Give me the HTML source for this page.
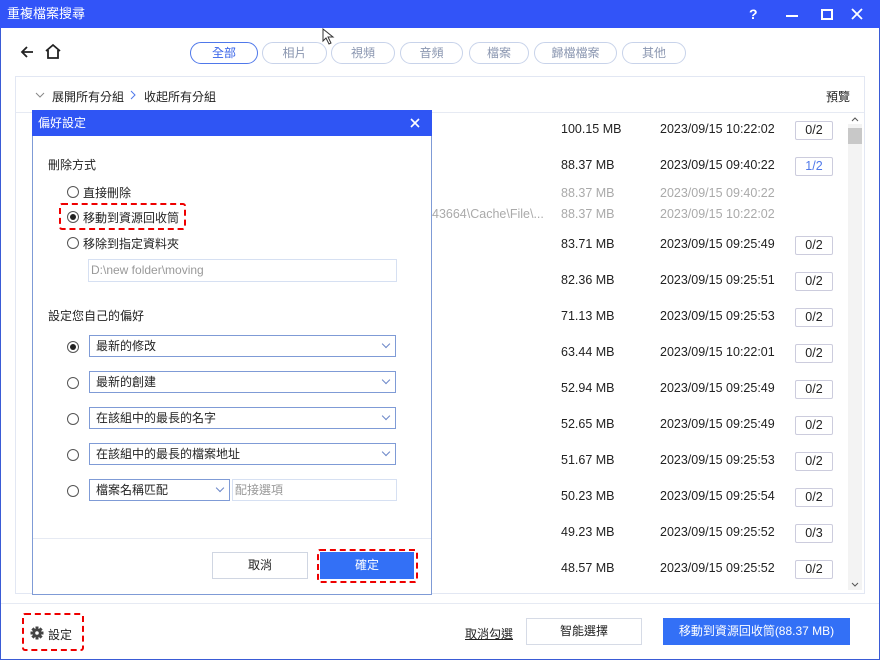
<!DOCTYPE html>
<html><head><meta charset="utf-8"><style>
*{box-sizing:border-box;margin:0;padding:0}
body{width:880px;height:660px;overflow:hidden;background:#fff;font-family:"Liberation Sans","Noto Sans CJK TC",sans-serif;font-size:12px;color:#222;position:relative}
.a{position:absolute}
.win{left:0;top:0;width:880px;height:660px;border:1px solid #3a5bd6}
.title{left:0;top:0;width:880px;height:28px;background:#3254f8;color:#fff;font-size:13px;line-height:28px;padding-left:7px}
.pill{top:42px;height:22px;border:1px solid #c8d3ea;border-radius:11px;color:#8a96b0;text-align:center;line-height:20px;font-size:12px}
.row{left:0;width:880px;font-size:12.5px}
.badge{left:795px;width:38px;height:19px;border:1px solid #ccd;text-align:center;line-height:17px;font-size:12.5px;border-radius:2px}
.rad{width:12px;height:12px;border:1px solid #555;border-radius:50%;background:#fff}
.sel{height:22px;border:1px solid #7f9bd6;padding-left:6px;line-height:20px;font-size:12px}
.chev{position:absolute;right:6px;top:5px;width:6px;height:6px;border-right:1px solid #6a86c8;border-bottom:1px solid #6a86c8;transform:rotate(45deg)}
.red{border:2px dashed #e00;border-radius:3px}
</style></head><body>
<div class="a win"></div>
<div class="a title">重複檔案搜尋</div>
<div class="a" style="left:749px;top:6px;color:#fff;font-size:14px;font-weight:bold">?</div>
<div class="a" style="left:786px;top:15px;width:12px;height:2px;background:#fff"></div>
<div class="a" style="left:821px;top:9px;width:12px;height:11px;border:2px solid #fff"></div>
<svg class="a" style="left:851px;top:8px" width="12" height="12"><path d="M1 1L11 11M11 1L1 11" stroke="#fff" stroke-width="1.8"/></svg>
<svg class="a" style="left:322px;top:28px" width="14" height="18"><path d="M1 1 L1 13 L4 10 L7 16 L9 15 L6 9 L11 9 Z" fill="#fff" stroke="#333"/></svg>
<svg class="a" style="left:19px;top:44px" width="16" height="16"><path d="M14 8H3M8 3L3 8l5 5" stroke="#222" stroke-width="1.8" fill="none"/></svg>
<svg class="a" style="left:44px;top:43px" width="18" height="17"><path d="M2 8L9 2l7 6M4 7v8h10V7" stroke="#222" stroke-width="1.8" fill="none"/></svg>
<div class="a pill" style="left:190px;width:68px;border-color:#4f78ea;color:#3561e8">全部</div>
<div class="a pill" style="left:262px;width:65px">相片</div>
<div class="a pill" style="left:331px;width:64px">視頻</div>
<div class="a pill" style="left:400px;width:63px">音頻</div>
<div class="a pill" style="left:469px;width:60px">檔案</div>
<div class="a pill" style="left:534px;width:83px">歸檔檔案</div>
<div class="a pill" style="left:622px;width:64px">其他</div>
<div class="a" style="left:15px;top:76px;width:850px;height:518px;border:1px solid #e2e7f3"></div>
<div class="a" style="left:16px;top:112px;width:848px;height:1px;background:#e6eaf3"></div>
<svg class="a" style="left:35px;top:91px" width="10" height="8"><path d="M1 2l4 4 4-4" stroke="#888" fill="none"/></svg>
<div class="a" style="left:52px;top:88px;font-size:12px">展開所有分組</div>
<svg class="a" style="left:129px;top:90px" width="8" height="10"><path d="M2 1l4 4-4 4" stroke="#4f78ea" fill="none"/></svg>
<div class="a" style="left:144px;top:88px;font-size:12px">收起所有分組</div>
<div class="a" style="left:826px;top:88px;font-size:12px">預覽</div>
<div class="a" style="left:848px;top:124px;width:14px;height:466px;background:#f3f3f3"></div>
<div class="a" style="left:848px;top:128px;width:14px;height:16px;background:#c8c8c8"></div>
<svg class="a" style="left:851px;top:116px" width="8" height="6"><path d="M1 5l3-3 3 3" stroke="#555" fill="none"/></svg>
<svg class="a" style="left:851px;top:582px" width="8" height="6"><path d="M1 1l3 3 3-3" stroke="#555" fill="none"/></svg>

<div class="a row" style="top:122px"><span class="a" style="left:561px">100.15 MB</span><span class="a" style="left:660px">2023/09/15 10:22:02</span></div><div class="a badge" style="top:121px">0/2</div>
<div class="a row" style="top:158px"><span class="a" style="left:561px">88.37 MB</span><span class="a" style="left:660px">2023/09/15 09:40:22</span></div><div class="a badge" style="top:157px;color:#4f78ea">1/2</div>
<div class="a row" style="top:186px;color:#aaa"><span class="a" style="left:561px">88.37 MB</span><span class="a" style="left:660px">2023/09/15 09:40:22</span></div>
<div class="a row" style="top:207px;color:#aaa"><span class="a" style="left:432px">43664\Cache\File\...</span><span class="a" style="left:561px">88.37 MB</span><span class="a" style="left:660px">2023/09/15 10:22:02</span></div>
<div class="a row" style="top:237px"><span class="a" style="left:561px">83.71 MB</span><span class="a" style="left:660px">2023/09/15 09:25:49</span></div><div class="a badge" style="top:236px">0/2</div>
<div class="a row" style="top:273px"><span class="a" style="left:561px">82.36 MB</span><span class="a" style="left:660px">2023/09/15 09:25:51</span></div><div class="a badge" style="top:272px">0/2</div>
<div class="a row" style="top:309px"><span class="a" style="left:561px">71.13 MB</span><span class="a" style="left:660px">2023/09/15 09:25:53</span></div><div class="a badge" style="top:308px">0/2</div>
<div class="a row" style="top:345px"><span class="a" style="left:561px">63.44 MB</span><span class="a" style="left:660px">2023/09/15 10:22:01</span></div><div class="a badge" style="top:344px">0/2</div>
<div class="a row" style="top:381px"><span class="a" style="left:561px">52.94 MB</span><span class="a" style="left:660px">2023/09/15 09:25:49</span></div><div class="a badge" style="top:380px">0/2</div>
<div class="a row" style="top:417px"><span class="a" style="left:561px">52.65 MB</span><span class="a" style="left:660px">2023/09/15 09:25:49</span></div><div class="a badge" style="top:416px">0/2</div>
<div class="a row" style="top:453px"><span class="a" style="left:561px">51.67 MB</span><span class="a" style="left:660px">2023/09/15 09:25:53</span></div><div class="a badge" style="top:452px">0/2</div>
<div class="a row" style="top:489px"><span class="a" style="left:561px">50.23 MB</span><span class="a" style="left:660px">2023/09/15 09:25:54</span></div><div class="a badge" style="top:488px">0/2</div>
<div class="a row" style="top:525px"><span class="a" style="left:561px">49.23 MB</span><span class="a" style="left:660px">2023/09/15 09:25:52</span></div><div class="a badge" style="top:524px">0/3</div>
<div class="a row" style="top:561px"><span class="a" style="left:561px">48.57 MB</span><span class="a" style="left:660px">2023/09/15 09:25:52</span></div><div class="a badge" style="top:560px">0/2</div>

<!-- dialog -->
<div class="a" style="left:32px;top:110px;width:400px;height:485px;background:#fff;border:1px solid #7f9bd6"></div>
<div class="a" style="left:32px;top:110px;width:400px;height:26px;background:#2f55f4;color:#fff;line-height:26px;padding-left:6px;font-size:12px">偏好設定</div>
<svg class="a" style="left:410px;top:118px" width="10" height="10"><path d="M1 1L9 9M9 1L1 9" stroke="#fff" stroke-width="1.6"/></svg>
<div class="a" style="left:48px;top:156px">刪除方式</div>
<div class="a rad" style="left:67px;top:186px"></div><div class="a" style="left:83px;top:184px">直接刪除</div>
<div class="a red" style="left:59px;top:203px;width:127px;height:27px"></div>
<div class="a rad" style="left:67px;top:211px"></div><div class="a" style="left:70px;top:214px;width:6px;height:6px;border-radius:50%;background:#222"></div><div class="a" style="left:83px;top:209px">移動到資源回收筒</div>
<div class="a rad" style="left:67px;top:237px"></div><div class="a" style="left:83px;top:235px">移除到指定資料夾</div>
<div class="a" style="left:88px;top:259px;width:309px;height:23px;border:1px solid #d6e0f2;color:#999;line-height:21px;padding-left:2px">D:\new folder\moving</div>
<div class="a" style="left:48px;top:307px">設定您自己的偏好</div>
<div class="a rad" style="left:67px;top:341px"></div><div class="a" style="left:70px;top:344px;width:6px;height:6px;border-radius:50%;background:#222"></div>
<div class="a sel" style="left:89px;top:335px;width:307px">最新的修改<i class="chev"></i></div>
<div class="a rad" style="left:67px;top:377px"></div>
<div class="a sel" style="left:89px;top:371px;width:307px">最新的創建<i class="chev"></i></div>
<div class="a rad" style="left:67px;top:413px"></div>
<div class="a sel" style="left:89px;top:407px;width:307px">在該組中的最長的名字<i class="chev"></i></div>
<div class="a rad" style="left:67px;top:449px"></div>
<div class="a sel" style="left:89px;top:443px;width:307px">在該組中的最長的檔案地址<i class="chev"></i></div>
<div class="a rad" style="left:67px;top:485px"></div>
<div class="a sel" style="left:89px;top:479px;width:141px">檔案名稱匹配<i class="chev"></i></div>
<div class="a" style="left:232px;top:479px;width:165px;height:22px;border:1px solid #d6e0f2;color:#999;line-height:20px;padding-left:2px">配接選項</div>
<div class="a" style="left:33px;top:538px;width:398px;height:1px;background:#e6eaf3"></div>
<div class="a" style="left:212px;top:552px;width:96px;height:27px;border:1px solid #d0d6e2;text-align:center;line-height:25px">取消</div>
<div class="a" style="left:320px;top:552px;width:94px;height:27px;background:#3370f6;color:#fff;text-align:center;line-height:27px">確定</div>
<div class="a red" style="left:317px;top:549px;width:101px;height:34px"></div>

<!-- bottom -->
<div class="a" style="left:1px;top:603px;width:878px;height:1px;background:#e6eaf3"></div>
<div class="a red" style="left:22px;top:613px;width:62px;height:38px"></div>
<svg class="a" style="left:30px;top:626px" width="14" height="14" viewBox="0 0 14 14"><g fill="#444"><circle cx="7" cy="7" r="4.5"/><rect x="5.5" y="0.5" width="3" height="13"/><rect x="0.5" y="5.5" width="13" height="3"/><rect x="5.5" y="0.5" width="3" height="13" transform="rotate(45 7 7)"/><rect x="5.5" y="0.5" width="3" height="13" transform="rotate(-45 7 7)"/></g><circle cx="7" cy="7" r="1.8" fill="#fff"/></svg>
<div class="a" style="left:48px;top:626px">設定</div>
<div class="a" style="left:465px;top:625px;text-decoration:underline">取消勾選</div>
<div class="a" style="left:526px;top:618px;width:116px;height:27px;border:1px solid #d6dbe6;text-align:center;line-height:25px">智能選擇</div>
<div class="a" style="left:663px;top:618px;width:187px;height:27px;background:#3370f6;color:#fff;text-align:center;line-height:27px">移動到資源回收筒(88.37 MB)</div>
</body></html>
